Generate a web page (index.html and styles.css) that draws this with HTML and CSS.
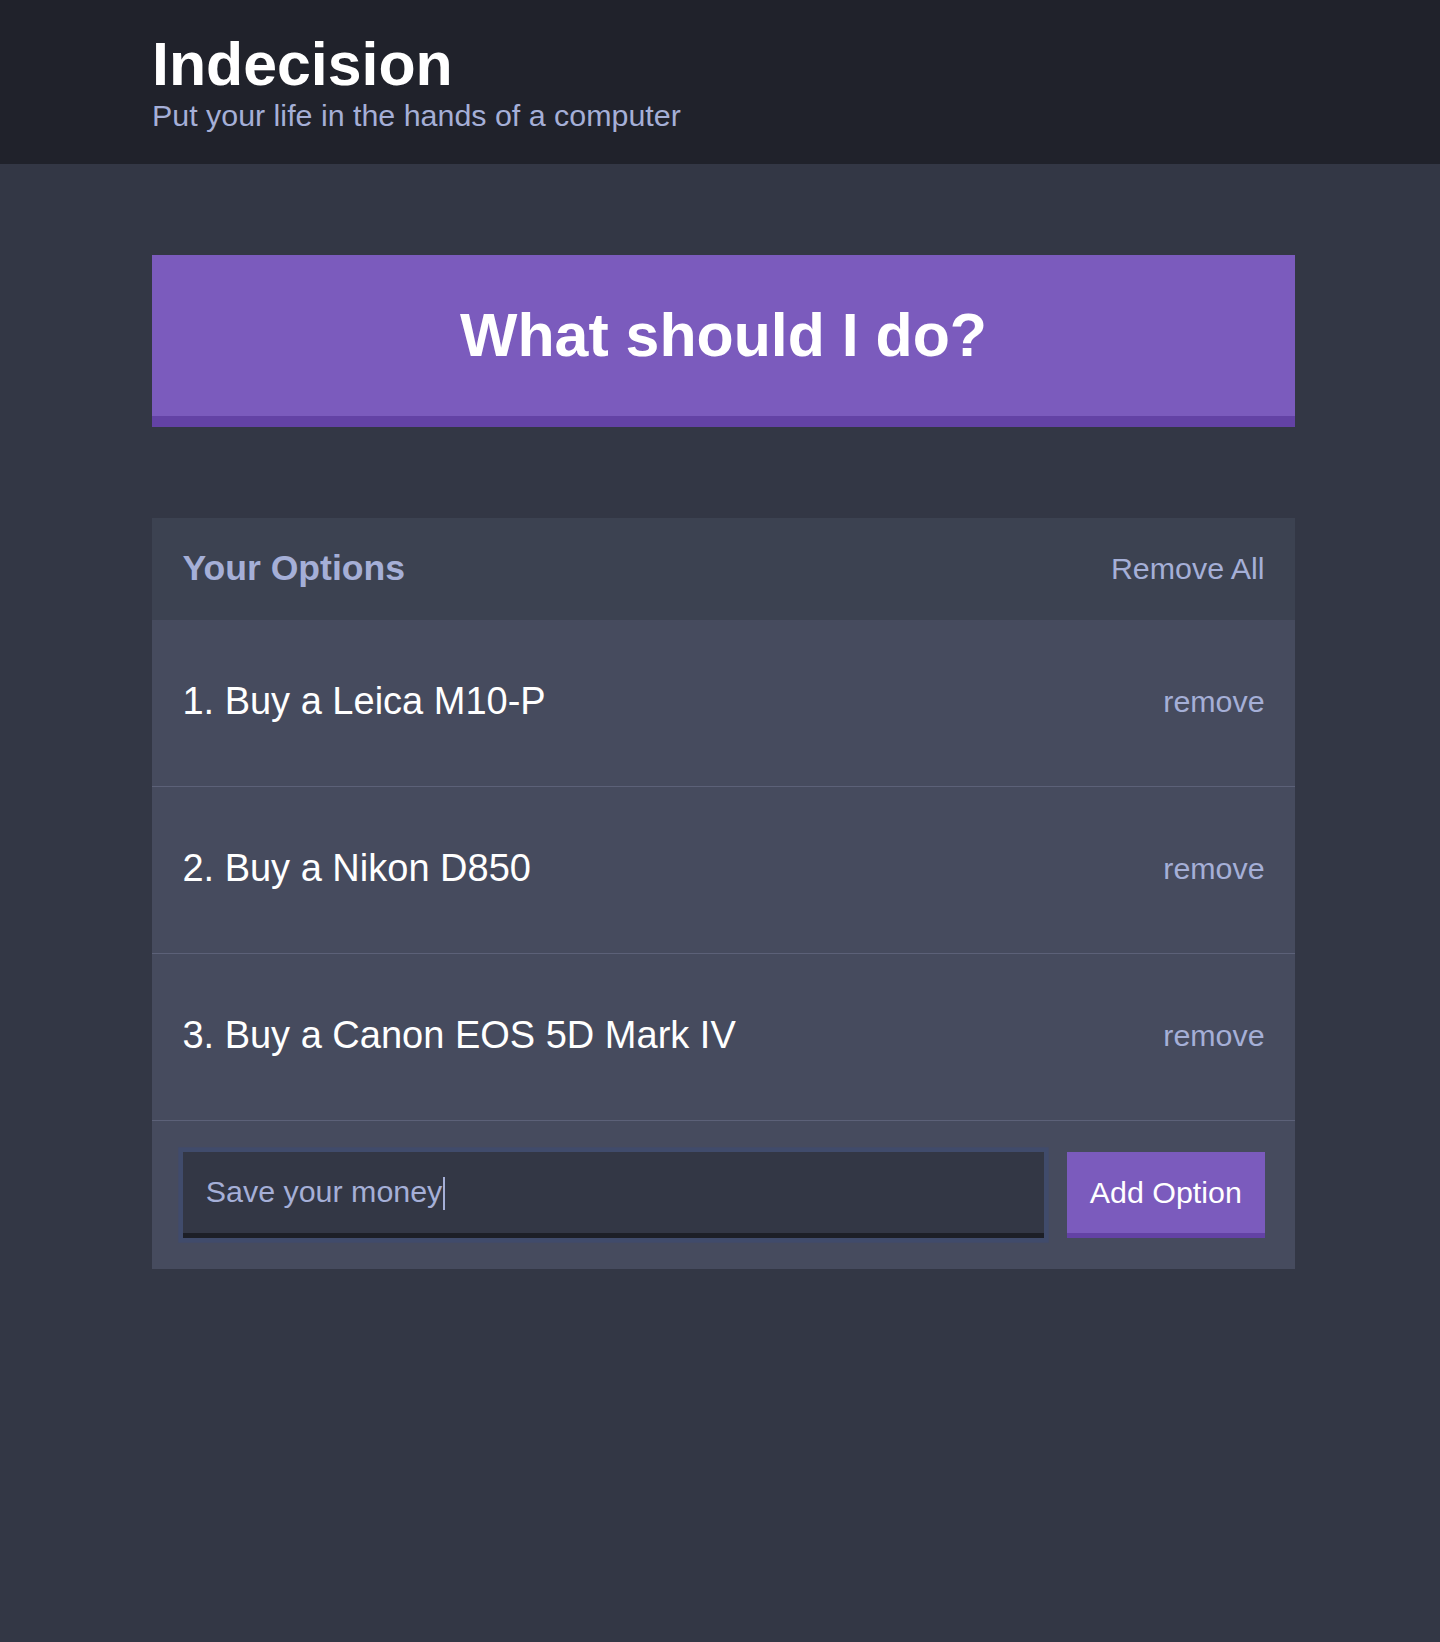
FILE: index.html
```html
<!DOCTYPE html>
<html lang="en">
<head>
<meta charset="utf-8">
<title>Indecision</title>
<link rel="stylesheet" href="styles.css">
</head>
<body>
  <header class="header">
    <div class="container">
      <h1 class="header__title">Indecision</h1>
      <h2 class="header__subtitle">Put your life in the hands of a computer</h2>
    </div>
  </header>
  <main class="container">
    <button class="big-button">What should I do?</button>
    <section class="widget">
      <div class="widget-header">
        <h3 class="widget-header__title">Your Options</h3>
        <button class="button--link">Remove All</button>
      </div>
      <div class="option">
        <p class="option__text">1. Buy a Leica M10-P</p>
        <button class="button--link">remove</button>
      </div>
      <div class="option">
        <p class="option__text">2. Buy a Nikon D850</p>
        <button class="button--link">remove</button>
      </div>
      <div class="option">
        <p class="option__text">3. Buy a Canon EOS 5D Mark IV</p>
        <button class="button--link">remove</button>
      </div>
      <form class="add-option">
        <div class="add-option__input" role="textbox">Save your money<span class="caret"></span></div>
        <button class="button" type="button">Add Option</button>
      </form>
    </section>
  </main>
</body>
</html>
```
FILE: styles.css
```css
* {
  box-sizing: border-box;
}

html, body {
  margin: 0;
  padding: 0;
}

body {
  background: #333745;
  font-family: "Liberation Sans", Arial, Helvetica, sans-serif;
  font-size: 30.4px;
  color: #a5afd7;
}

.container {
  width: 1143px;
  margin: 0 0 0 152px;
}

.header {
  background: #20222b;
  padding: 30px 0 33px;
  margin-bottom: 91px;
}

.header__title {
  color: #ffffff;
  font-size: 60.8px;
  font-weight: 700;
  line-height: 69px;
  margin: 0;
}

.header__subtitle {
  color: #a5afd7;
  font-size: 30.4px;
  font-weight: 400;
  line-height: 32px;
  margin: 0;
}

.big-button {
  display: block;
  width: 100%;
  background: #7b5bbd;
  border: none;
  border-bottom: 11.4px solid #6342a5;
  color: #ffffff;
  font-family: "Liberation Sans", Arial, Helvetica, sans-serif;
  font-weight: 700;
  font-size: 60.8px;
  line-height: 70px;
  padding: 44.6px 45.6px 46.6px;
  margin: 0 0 91.2px;
}

.widget {
  background: #464b5e;
  margin-bottom: 91px;
}

.widget-header {
  background: #3c4251;
  display: flex;
  justify-content: space-between;
  align-items: center;
  padding: 29.4px 30.4px 31.4px;
}

.widget-header__title {
  margin: 0;
  font-size: 35.6px;
  font-weight: 700;
  line-height: 40.9px;
  color: #a5afd7;
}

.button--link {
  background: none;
  border: none;
  padding: 0;
  color: #a5afd7;
  font-family: "Liberation Sans", Arial, Helvetica, sans-serif;
  font-size: 30.4px;
  line-height: 35px;
}

.option {
  display: flex;
  justify-content: space-between;
  align-items: center;
  padding: 58.8px 30.4px 62.8px;
  border-bottom: 1px solid #5c6178;
}

.option__text {
  color: #ffffff;
  font-size: 38px;
  line-height: 44.5px;
  margin: 0;
}

.add-option {
  display: flex;
  padding: 30.4px 30.4px 30.4px 31px;
  margin: 0;
}

.add-option__input {
  flex-grow: 1;
  background: #333745;
  border-bottom: 5.7px solid #1d1f27;
  color: #a5afd7;
  font-size: 30.4px;
  line-height: 34px;
  padding: 21.8px 22.8px 23.8px;
  margin-right: 22.8px;
  box-shadow: 0 0 0 4.7px #404b6b;
  white-space: nowrap;
}

.caret {
  display: inline-block;
  width: 2px;
  height: 33px;
  background: #a5afd7;
  vertical-align: -8px;
  margin-left: 1px;
}

.button {
  background: #7b5bbd;
  border: none;
  border-bottom: 5.7px solid #6342a5;
  color: #ffffff;
  font-family: "Liberation Sans", Arial, Helvetica, sans-serif;
  font-size: 30.4px;
  line-height: 34px;
  padding: 21.8px 22.8px 23.8px;
}
```
